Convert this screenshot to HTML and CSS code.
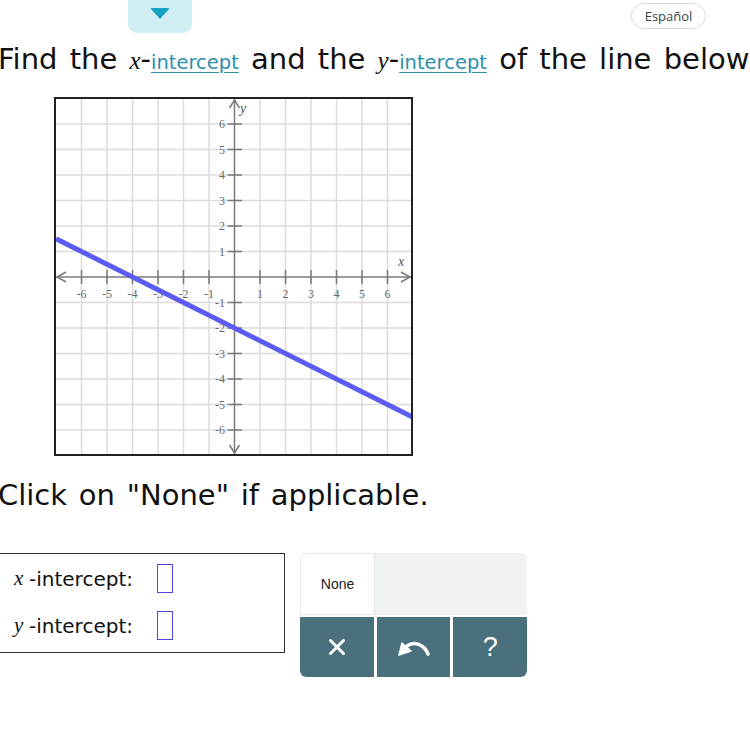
FILE: index.html
```html
<!DOCTYPE html>
<html>
<head>
<meta charset="utf-8">
<link rel="stylesheet" href="styles.css">
</head>
<body>
<header class="topbar">
  <div class="tab"><span class="tri"></span></div>
  <button class="lang">Español</button>
</header>

<h1 class="question">Find the <span class="var">x</span>-<a class="term">intercept</a> and the <span class="var">y</span>-<a class="term">intercept</a> of the line below</h1>

<div class="graph">
  <svg width="359" height="359" viewBox="0 0 359 359" xmlns="http://www.w3.org/2000/svg">
    <rect x="0" y="0" width="359" height="359" fill="#fff"/>
    <g stroke="#dcdcdc" stroke-width="1.5">
      <line x1="27.5" y1="2" x2="27.5" y2="357"/>
      <line x1="53" y1="2" x2="53" y2="357"/>
      <line x1="78.5" y1="2" x2="78.5" y2="357"/>
      <line x1="104" y1="2" x2="104" y2="357"/>
      <line x1="129.5" y1="2" x2="129.5" y2="357"/>
      <line x1="155" y1="2" x2="155" y2="357"/>
      <line x1="206" y1="2" x2="206" y2="357"/>
      <line x1="231.5" y1="2" x2="231.5" y2="357"/>
      <line x1="257" y1="2" x2="257" y2="357"/>
      <line x1="282.5" y1="2" x2="282.5" y2="357"/>
      <line x1="308" y1="2" x2="308" y2="357"/>
      <line x1="333.5" y1="2" x2="333.5" y2="357"/>
      <line y1="27" x1="2" y2="27" x2="357"/>
      <line y1="52.5" x1="2" y2="52.5" x2="357"/>
      <line y1="78" x1="2" y2="78" x2="357"/>
      <line y1="103.5" x1="2" y2="103.5" x2="357"/>
      <line y1="129" x1="2" y2="129" x2="357"/>
      <line y1="154.5" x1="2" y2="154.5" x2="357"/>
      <line y1="205.5" x1="2" y2="205.5" x2="357"/>
      <line y1="231" x1="2" y2="231" x2="357"/>
      <line y1="256.5" x1="2" y2="256.5" x2="357"/>
      <line y1="282" x1="2" y2="282" x2="357"/>
      <line y1="307.5" x1="2" y2="307.5" x2="357"/>
      <line y1="333" x1="2" y2="333" x2="357"/>
    </g>
    <g stroke="#7a7a7a" stroke-width="1.5" fill="none">
      <line x1="2" y1="180" x2="357" y2="180"/>
      <line x1="180.5" y1="2" x2="180.5" y2="357"/>
      <polyline points="12,175 3,180 12,185"/>
      <polyline points="347,175 356,180 347,185"/>
      <polyline points="175.5,11 180.5,3 185.5,11"/>
      <polyline points="175.5,348 180.5,356 185.5,348"/>
      <line x1="27.5" y1="173" x2="27.5" y2="187"/>
      <line x1="53" y1="173" x2="53" y2="187"/>
      <line x1="78.5" y1="173" x2="78.5" y2="187"/>
      <line x1="104" y1="173" x2="104" y2="187"/>
      <line x1="129.5" y1="173" x2="129.5" y2="187"/>
      <line x1="155" y1="173" x2="155" y2="187"/>
      <line x1="206" y1="173" x2="206" y2="187"/>
      <line x1="231.5" y1="173" x2="231.5" y2="187"/>
      <line x1="257" y1="173" x2="257" y2="187"/>
      <line x1="282.5" y1="173" x2="282.5" y2="187"/>
      <line x1="308" y1="173" x2="308" y2="187"/>
      <line x1="333.5" y1="173" x2="333.5" y2="187"/>
      <line y1="27" x1="173.5" y2="27" x2="188"/>
      <line y1="52.5" x1="173.5" y2="52.5" x2="188"/>
      <line y1="78" x1="173.5" y2="78" x2="188"/>
      <line y1="103.5" x1="173.5" y2="103.5" x2="188"/>
      <line y1="129" x1="173.5" y2="129" x2="188"/>
      <line y1="154.5" x1="173.5" y2="154.5" x2="188"/>
      <line y1="205.5" x1="173.5" y2="205.5" x2="188"/>
      <line y1="231" x1="173.5" y2="231" x2="188"/>
      <line y1="256.5" x1="173.5" y2="256.5" x2="188"/>
      <line y1="282" x1="173.5" y2="282" x2="188"/>
      <line y1="307.5" x1="173.5" y2="307.5" x2="188"/>
      <line y1="333" x1="173.5" y2="333" x2="188"/>
    </g>
    <g class="ticklabel" text-anchor="middle">
      <text x="27.5" y="201">-6</text>
      <text x="53" y="201">-5</text>
      <text x="78.5" y="201">-4</text>
      <text x="104" y="201">-3</text>
      <text x="129.5" y="201">-2</text>
      <text x="155" y="201">-1</text>
      <text x="206" y="201">1</text>
      <text x="231.5" y="201">2</text>
      <text x="257" y="201">3</text>
      <text x="282.5" y="201">4</text>
      <text x="308" y="201">5</text>
      <text x="333.5" y="201">6</text>
    </g>
    <g class="ticklabel" text-anchor="end">
      <text x="171" y="31">6</text>
      <text x="171" y="56.5">5</text>
      <text x="171" y="82">4</text>
      <text x="171" y="107.5">3</text>
      <text x="171" y="133">2</text>
      <text x="171" y="158.5">1</text>
      <text x="171" y="209.5">-1</text>
      <text x="171" y="235">-2</text>
      <text x="171" y="260.5">-3</text>
      <text x="171" y="286">-4</text>
      <text x="171" y="311.5">-5</text>
      <text x="171" y="337">-6</text>
    </g>
    <text class="axislabel" x="186" y="16">y</text>
    <text class="axislabel" x="344" y="169">x</text>
    <line x1="2" y1="141.75" x2="358" y2="319.75" stroke="#5c5cf2" stroke-width="5"/>
    <rect x="1" y="1" width="357" height="357" fill="none" stroke="#222" stroke-width="2"/>
  </svg>
</div>

<p class="hint">Click on "None" if applicable.</p>

<section class="answer">
  <div class="answerbox">
    <div class="row"><span class="var small">x</span><span class="lbl">-intercept:</span><span class="slot"></span></div>
    <div class="row"><span class="var small">y</span><span class="lbl">-intercept:</span><span class="slot"></span></div>
  </div>
  <div class="keypad">
    <div class="keyrow top">
      <button class="key none">None</button>
      <div class="filler"></div>
    </div>
    <div class="keyrow bottom">
      <button class="key dark">
        <svg width="18" height="18" viewBox="0 0 18 18"><path d="M2.5 2.5 L15.5 15.5 M15.5 2.5 L2.5 15.5" stroke="#fff" stroke-width="3" stroke-linecap="round"/></svg>
      </button>
      <button class="key dark">
        <svg width="34" height="20" viewBox="0 0 34 20"><path d="M31 17 C 27 7, 17 4, 10 9" stroke="#fff" stroke-width="3.6" fill="none" stroke-linecap="round"/><path d="M2 18 L5 6 L14 14 Z" fill="#fff" stroke="#fff" stroke-width="1.5" stroke-linejoin="round"/></svg>
      </button>
      <button class="key dark q">?</button>
    </div>
  </div>
</section>
</body>
</html>
```

FILE: styles.css
```css
* { box-sizing: border-box; }
html, body { margin: 0; padding: 0; background: #fff; }
body {
  width: 750px;
  height: 750px;
  overflow: hidden;
  font-family: "DejaVu Sans", Verdana, sans-serif;
  color: #111;
}

.topbar {
  display: flex;
  align-items: flex-start;
  justify-content: space-between;
  height: 33px;
}
.tab {
  margin-left: 128px;
  width: 64px;
  height: 33px;
  background: #cfeef4;
  border-radius: 0 0 9px 9px;
  display: flex;
  justify-content: center;
  padding-top: 8px;
}
.tri {
  width: 0;
  height: 0;
  border-left: 10px solid transparent;
  border-right: 10px solid transparent;
  border-top: 11px solid #17a2c4;
  border-radius: 2px;
}
.lang {
  margin-top: 3px;
  margin-right: 44px;
  width: 75px;
  height: 26px;
  border: 1px solid #d6dcde;
  border-radius: 13px;
  background: #fff;
  font-family: "Open Sans", "Liberation Sans", sans-serif;
  font-size: 13px;
  color: #344550;
  padding: 0;
}

.question {
  margin: 9px 0 0 -2px;
  font-weight: normal;
  font-size: 29px;
  word-spacing: 3px;
  line-height: 34px;
  white-space: nowrap;
  color: #111;
}
.var {
  font-family: "Liberation Serif", "Times New Roman", serif;
  font-style: italic;
  font-size: 25px;
  word-spacing: 0;
}
.term {
  font-size: 19.5px;
  color: #2d8fab;
  text-decoration: underline;
  text-underline-offset: 3px;
  word-spacing: 0;
}

.graph {
  margin: 17px 0 0 54px;
  width: 359px;
  height: 359px;
}
.graph svg { display: block; }
.ticklabel {
  font-family: "Liberation Serif", "Times New Roman", serif;
  font-size: 12px;
  fill: #6a6a6a;
}
.axislabel {
  font-family: "Liberation Serif", "Times New Roman", serif;
  font-style: italic;
  font-size: 14px;
  fill: #555;
}

.hint {
  margin: 22px 0 0 -2px;
  font-size: 29px;
  word-spacing: 2.5px;
  line-height: 34px;
  color: #111;
}

.answer {
  display: flex;
  align-items: flex-start;
  margin-top: 41px;
}
.answerbox {
  margin-left: -1px;
  width: 286px;
  height: 100px;
  border: 1px solid #333;
  padding: 10px 0 0 14px;
  display: flex;
  flex-direction: column;
  gap: 18px;
}
.row {
  display: flex;
  align-items: center;
  height: 29px;
}
.var.small { font-size: 21px; width: 15px; }
.lbl { font-size: 20px; color: #111; }
.slot {
  margin-left: 24px;
  width: 16px;
  height: 29px;
  border: 1.5px solid #4a4ae0;
}

.keypad {
  margin-left: 15px;
  width: 227px;
  height: 124px;
  display: flex;
  flex-direction: column;
  gap: 2px;
  border-radius: 6px;
  overflow: hidden;
  background: #fff;
}
.keyrow { display: flex; }
.keyrow.top { height: 62px; background: #eef2f3; border-radius: 6px 6px 0 0; }
.keyrow.bottom { height: 60px; gap: 3px; }
.key {
  border: none;
  padding: 0;
  margin: 0;
  font-family: "Liberation Sans", Arial, sans-serif;
  cursor: pointer;
  display: flex;
  align-items: center;
  justify-content: center;
}
.key.none {
  width: 75px;
  background: #fff;
  border: 1px solid #e2e7e9;
  border-radius: 6px 0 0 0;
  font-size: 14px;
  color: #222;
}
.filler { flex: 1; }
.key.dark {
  flex: 1;
  background: #4b707d;
  color: #fff;
}
.keyrow.bottom .key.dark:first-child { border-radius: 0 0 0 6px; }
.keyrow.bottom .key.dark:last-child { border-radius: 0 0 6px 0; }
.key.q { font-size: 27px; }
```
